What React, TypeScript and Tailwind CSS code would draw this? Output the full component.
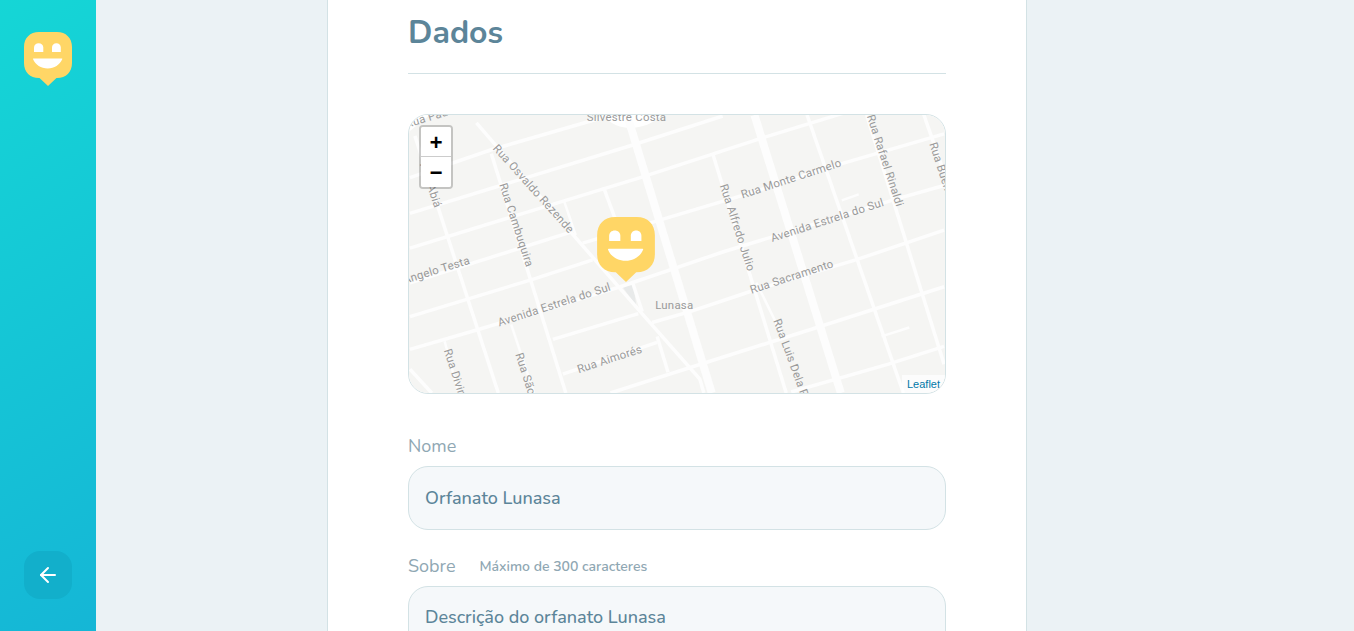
import React from 'react';
import { ArrowLeft } from 'lucide-react';

const FONT = 'font-["Nunito","Lato","Noto_Sans",sans-serif]';

// thick avenues, normal streets and thin side streets, in page coordinates
const bigRoads = ['M628 118L712 394', 'M755 114L842 394'];

const roads = [
  'M408 177L490 149L590 120L625 110',
  'M408 213L630 145L723 115',
  'M408 248L640 177L760 138L845 112',
  'M408 283L513 250L570 232',
  'M582 243L743 195L843 163L946 133',
  'M408 317L530 280L592 260',
  'M408 350L477 330L620 287L723 252L900 198L946 185',
  'M652 323L690 312L750 292L857 260L946 230',
  'M552 340L638 314',
  'M562 375L657 343',
  'M610 394L707 363L818 328L946 287',
  'M792 393L890 365L946 347',
  'M413 135L497 394',
  'M490 153L565 394',
  'M475 122L570 232L640 312L700 380L704 394',
  'M808 114L905 394',
  'M713 153L787 394',
  'M868 114L946 365',
  'M925 112L946 172',
  'M603 187L616 222',
  'M632 282L642 312',
  'M657 337L668 373',
  'M408 370L430 394',
];

const thinRoads = [
  'M563 200L575 235',
  'M443 342L457 394',
  'M510 325L533 394',
  'M757 283L785 340',
  'M843 200L860 194',
  'M883 337L911 328',
];

const labels = [
  { text: 'Rua Paulo', x: 405, y: 127, r: -17 },
  { text: 'Silvestre Costa', x: 586, y: 120, r: 0 },
  { text: 'Rua Osvaldo Rezende', x: 491, y: 148, r: 48 },
  { text: 'Rua Abiá', x: 418, y: 163, r: 72 },
  { text: 'Rua Cambuquira', x: 498, y: 184, r: 72 },
  { text: 'Rua Alfredo Julio', x: 720, y: 185, r: 72 },
  { text: 'Rua Monte Carmelo', x: 743, y: 198, r: -18 },
  { text: 'Rua Rafael Rinaldi', x: 868, y: 115, r: 72 },
  { text: 'Rua Buenos', x: 931, y: 143, r: 72 },
  { text: 'Avenida Estrela do Sul', x: 773, y: 242, r: -18 },
  { text: 'Avenida Estrela do Sul', x: 498, y: 327, r: -18 },
  { text: 'Rua Angelo Testa', x: 380, y: 291, r: -17 },
  { text: 'Lunasa', x: 655, y: 309, r: 0 },
  { text: 'Rua Sacramento', x: 752, y: 294, r: -18 },
  { text: 'Rua Aimorés', x: 578, y: 374, r: -18 },
  { text: 'Rua Luis Dela Pria', x: 774, y: 321, r: 70 },
  { text: 'Rua Divina', x: 442, y: 351, r: 72 },
  { text: 'Rua São', x: 514, y: 355, r: 72 },
];

const HappyLogo = ({ className }: { className: string }) => (
  <svg viewBox="0 0 48 54" className={className}>
    <path
      fill="#FFD666"
      d="M15 0H33C42 0 48 6 48 15V31C48 40 42 46 33 46H32.5L24 54L15.5 46H15C6 46 0 40 0 31V15C0 6 6 0 15 0Z"
    />
    <path fill="#fff" d="M10 20V15.6C10 13 12 11.2 14.7 11.2C17.3 11.2 19.3 13 19.3 15.6V20Z" />
    <path fill="#fff" d="M28 20V15.6C28 13 29.8 11.2 32.4 11.2C35 11.2 36.8 13 36.8 15.6V20Z" />
    <path fill="#fff" d="M9.6 26.4H37.8C38.3 26.4 38.4 26.8 38.2 27.2C35.8 32.8 30.4 36.4 23.7 36.4C17 36.4 11.4 32.8 9.1 27.2C8.9 26.8 9.1 26.4 9.6 26.4Z" />
  </svg>
);

const MapDrawing = () => (
  <svg viewBox="408 114 538 280" className="block h-full w-full bg-[#f5f5f3]">
    <path d="M600 112C610 124 620 127 630 127C642 127 655 122 664 112Z" fill="#fff" />
    <path d="M408 114H428L408 130Z" fill="#fff" />
    <path d="M622 287L633 285L636 306Z" fill="#e8eaea" />
    <g fill="none" stroke="#fdfdfd" strokeLinecap="butt">
      {thinRoads.map((d) => (
        <path key={d} d={d} strokeWidth="2.5" />
      ))}
      {roads.map((d) => (
        <path key={d} d={d} strokeWidth="3.5" />
      ))}
      {bigRoads.map((d) => (
        <path key={d} d={d} strokeWidth="8" />
      ))}
    </g>
    <g fill="#9a9a9a" fontSize="11.5" letterSpacing="0.25" fontFamily="Roboto, sans-serif">
      {labels.map((l) => (
        <text key={l.text + l.x} x={l.x} y={l.y} transform={`rotate(${l.r} ${l.x} ${l.y})`}>
          {l.text}
        </text>
      ))}
    </g>
  </svg>
);

export default function App() {
  return (
    <div className={`flex h-screen overflow-hidden bg-[#ebf2f5] ${FONT}`}>
      <aside className="flex w-24 shrink-0 flex-col items-center justify-between bg-[linear-gradient(329.54deg,#15b6d6_0%,#15d6d6_100%)] pt-8 pb-8">
        <HappyLogo className="h-[54px] w-12" />
        <button className="flex h-12 w-12 items-center justify-center rounded-2xl bg-[#12afcb] text-white">
          <ArrowLeft size={24} />
        </button>
      </aside>

      <main className="flex flex-1 justify-center pr-24">
        <form className="w-[700px] shrink-0 border-x border-[#d3e2e5] bg-white px-20 pt-4">
          <h2 className="border-b border-[#d3e2e5] pb-[23px] text-[32px] leading-[34px] font-bold text-[#5c8599]">
            Dados
          </h2>

          <div className="relative mt-10 h-[280px] overflow-hidden rounded-[20px] border border-[#d3e2e5]">
            <MapDrawing />
            <div className="absolute top-[10px] left-[10px] rounded border-2 border-black/20 bg-clip-padding">
              <div className="flex h-[30px] w-[30px] items-center justify-center rounded-t-[2px] border-b border-[#ccc] bg-white pt-[5px] font-['Liberation_Mono',monospace] text-[22px] font-bold text-black">
                +
              </div>
              <div className="flex h-[30px] w-[30px] items-center justify-center rounded-b-[2px] bg-white pt-[4px] font-['Liberation_Mono',monospace] text-[22px] font-bold text-black">
                −
              </div>
            </div>
            <HappyLogo className="absolute top-[102px] left-[188px] h-[65px] w-[58px]" />
            <div className="absolute right-0 bottom-0 bg-white/70 px-[5px] font-['Liberation_Sans',sans-serif] text-[11px] leading-[18px] text-[#0078a8]">
              Leaflet
            </div>
          </div>

          <label className="mt-10 mb-2 block text-lg leading-[24px] text-[#8fa7b3]">Nome</label>
          <input
            readOnly
            value="Orfanato Lunasa"
            className="block h-16 w-full rounded-[20px] border border-[#d3e2e5] bg-[#f5f8fa] px-4 text-lg font-[550] text-[#5c8599] outline-none"
          />

          <label className="mt-6 mb-2 flex items-center text-lg leading-[24px] text-[#8fa7b3]">
            Sobre
            <span className="ml-6 pt-[2px] text-sm font-semibold">Máximo de 300 caracteres</span>
          </label>
          <textarea
            readOnly
            value="Descrição do orfanato Lunasa"
            className="block min-h-[120px] w-full resize-none rounded-[20px] border border-[#d3e2e5] bg-[#f5f8fa] p-4 text-lg leading-7 font-[550] text-[#5c8599] outline-none"
          />
        </form>
      </main>
    </div>
  );
}
